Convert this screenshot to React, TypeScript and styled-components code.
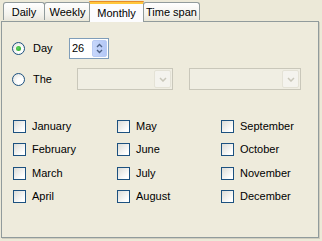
import React from "react";
import styled, { createGlobalStyle, css } from "styled-components";

const Global = createGlobalStyle`
  html, body { margin: 0; padding: 0; background: #ECE9D8; }
  body { font-family: Tahoma, "Liberation Sans", Arial, sans-serif; font-size: 11px; color: #000; }
`;

const Frame = styled.div`
  width: 322px;
  height: 241px;
  padding: 0 3px 3px 1px;
  box-sizing: border-box;
  display: flex;
  flex-direction: column;
`;

const TabStrip = styled.div`
  display: flex;
  align-items: flex-end;
  height: 21px;
  padding-left: 2px;
  position: relative;
  z-index: 1;
`;

const Tab = styled.div<{ $active?: boolean; $w: number }>`
  box-sizing: border-box;
  width: ${(p) => p.$w}px;
  height: 18px;
  margin-bottom: 1px;
  display: flex;
  align-items: center;
  justify-content: center;
  border: 1px solid #919B9C;
  border-bottom: none;
  border-radius: 3px 3px 0 0;
  background: linear-gradient(#FFFFFF, #F3F2EC 70%, #E9E7DF);
  margin-right: -1px;
  white-space: nowrap;
  ${(p) =>
    p.$active &&
    css`
      height: 21px;
      margin: 0 -1px -1px -1px;
      background: #FCFCFE;
      border-top: 3px solid #FFC73C;
      border-radius: 3px 3px 0 0;
      z-index: 2;
      padding-bottom: 1px;
      position: relative;
    `}
`;

const TabTop = styled.span`
  position: absolute;
  left: -1px;
  right: -1px;
  top: -3px;
  height: 1px;
  background: #E68B2C;
  border-radius: 3px 3px 0 0;
`;

const Panel = styled.div`
  flex: 1;
  box-sizing: border-box;
  border: 1px solid #919B9C;
  box-shadow: 1px 1px 0 #D0CEBF;
  background: #EEEBDC;
  padding: 15px 0 0 10px;
  display: flex;
  flex-direction: column;
`;

const OptionRow = styled.div<{ $mt?: number }>`
  display: flex;
  align-items: center;
  height: 22px;
  margin-top: ${(p) => p.$mt ?? 0}px;
`;

const RadioLabel = styled.label<{ $w: number }>`
  display: flex;
  align-items: center;
  width: ${(p) => p.$w}px;
`;

const Radio = styled.span<{ $checked?: boolean }>`
  box-sizing: border-box;
  width: 13px;
  height: 13px;
  border-radius: 50%;
  border: 1px solid #1C5180;
  background: radial-gradient(circle at 65% 65%, #FFFFFF 30%, #DCDCD7 100%);
  margin-right: 8px;
  display: flex;
  align-items: center;
  justify-content: center;
  &::after {
    content: "";
    display: ${(p) => (p.$checked ? "block" : "none")};
    width: 5px;
    height: 5px;
    border-radius: 50%;
    background: radial-gradient(circle at 40% 40%, #5FD35F, #21A121);
  }
`;

const Spinner = styled.div`
  box-sizing: border-box;
  width: 40px;
  height: 21px;
  border: 1px solid #7F9DB9;
  background: #fff;
  display: flex;
  align-items: center;
  padding: 1px 1px 1px 2px;
`;

const SpinValue = styled.span`
  flex: 1;
`;

const SpinButtons = styled.div`
  width: 15px;
  height: 17px;
  display: flex;
  flex-direction: column;
  border-radius: 2px;
  overflow: hidden;
  background: linear-gradient(90deg, #C7D7FB, #B4C8F6);
  border: 1px solid #B9CBF4;
  box-sizing: border-box;
  align-items: center;
  justify-content: center;
`;

const Combo = styled.div<{ $w: number; $ml: number }>`
  box-sizing: border-box;
  width: ${(p) => p.$w}px;
  height: 22px;
  margin-left: ${(p) => p.$ml}px;
  border: 1px solid #C9C7BA;
  background: #F0EEE3;
  display: flex;
  justify-content: flex-end;
  padding: 1px;
`;

const ComboButton = styled.div`
  box-sizing: border-box;
  width: 17px;
  height: 18px;
  background: #F4F3EE;
  border: 1px solid #E4E2D6;
  border-radius: 2px;
  display: flex;
  align-items: center;
  justify-content: center;
`;

const Months = styled.div`
  display: grid;
  grid-template-columns: 104px 104px 104px;
  grid-template-rows: 23px 24px 23px 23px;
  grid-auto-flow: column;
  margin-top: 30px;
  margin-left: 1px;
`;

const CheckItem = styled.label`
  display: flex;
  align-items: flex-start;
  height: 100%;
`;

const Box = styled.span`
  box-sizing: border-box;
  width: 13px;
  height: 13px;
  border: 1px solid #1C5180;
  background: linear-gradient(135deg, #DCDCD7, #FFFFFF 80%);
  margin-right: 6px;
  flex: none;
`;

const CheckText = styled.span`
  line-height: 13px;
`;

const months = [
  "January", "February", "March", "April",
  "May", "June", "July", "August",
  "September", "October", "November", "December",
];

const Chevron = () => (
  <svg width="8" height="5" viewBox="0 0 8 5">
    <path d="M1 1 L4 4 L7 1" fill="none" stroke="#C9C7BA" strokeWidth="1.5" />
  </svg>
);

export default function App() {
  return (
    <>
      <Global />
      <Frame>
        <TabStrip>
          <Tab $w={42}>Daily</Tab>
          <Tab $w={47}>Weekly</Tab>
          <Tab $w={55} $active>
            <TabTop />
            Monthly
          </Tab>
          <Tab $w={57}>Time span</Tab>
        </TabStrip>
        <Panel>
          <OptionRow>
            <RadioLabel $w={57}>
              <Radio $checked />
              Day
            </RadioLabel>
            <Spinner>
              <SpinValue>26</SpinValue>
              <SpinButtons>
                <svg width="7" height="13" viewBox="0 0 7 13">
                  <path d="M1 5 L3.5 2.5 L6 5" fill="none" stroke="#4D6185" strokeWidth="1.4" />
                  <path d="M1 8 L3.5 10.5 L6 8" fill="none" stroke="#4D6185" strokeWidth="1.4" />
                </svg>
              </SpinButtons>
            </Spinner>
          </OptionRow>
          <OptionRow $mt={9}>
            <RadioLabel $w={65}>
              <Radio />
              The
            </RadioLabel>
            <Combo $w={96} $ml={0}>
              <ComboButton>
                <Chevron />
              </ComboButton>
            </Combo>
            <Combo $w={112} $ml={16}>
              <ComboButton>
                <Chevron />
              </ComboButton>
            </Combo>
          </OptionRow>
          <Months>
            {months.map((m) => (
              <CheckItem key={m}>
                <Box />
                <CheckText>{m}</CheckText>
              </CheckItem>
            ))}
          </Months>
        </Panel>
      </Frame>
    </>
  );
}
